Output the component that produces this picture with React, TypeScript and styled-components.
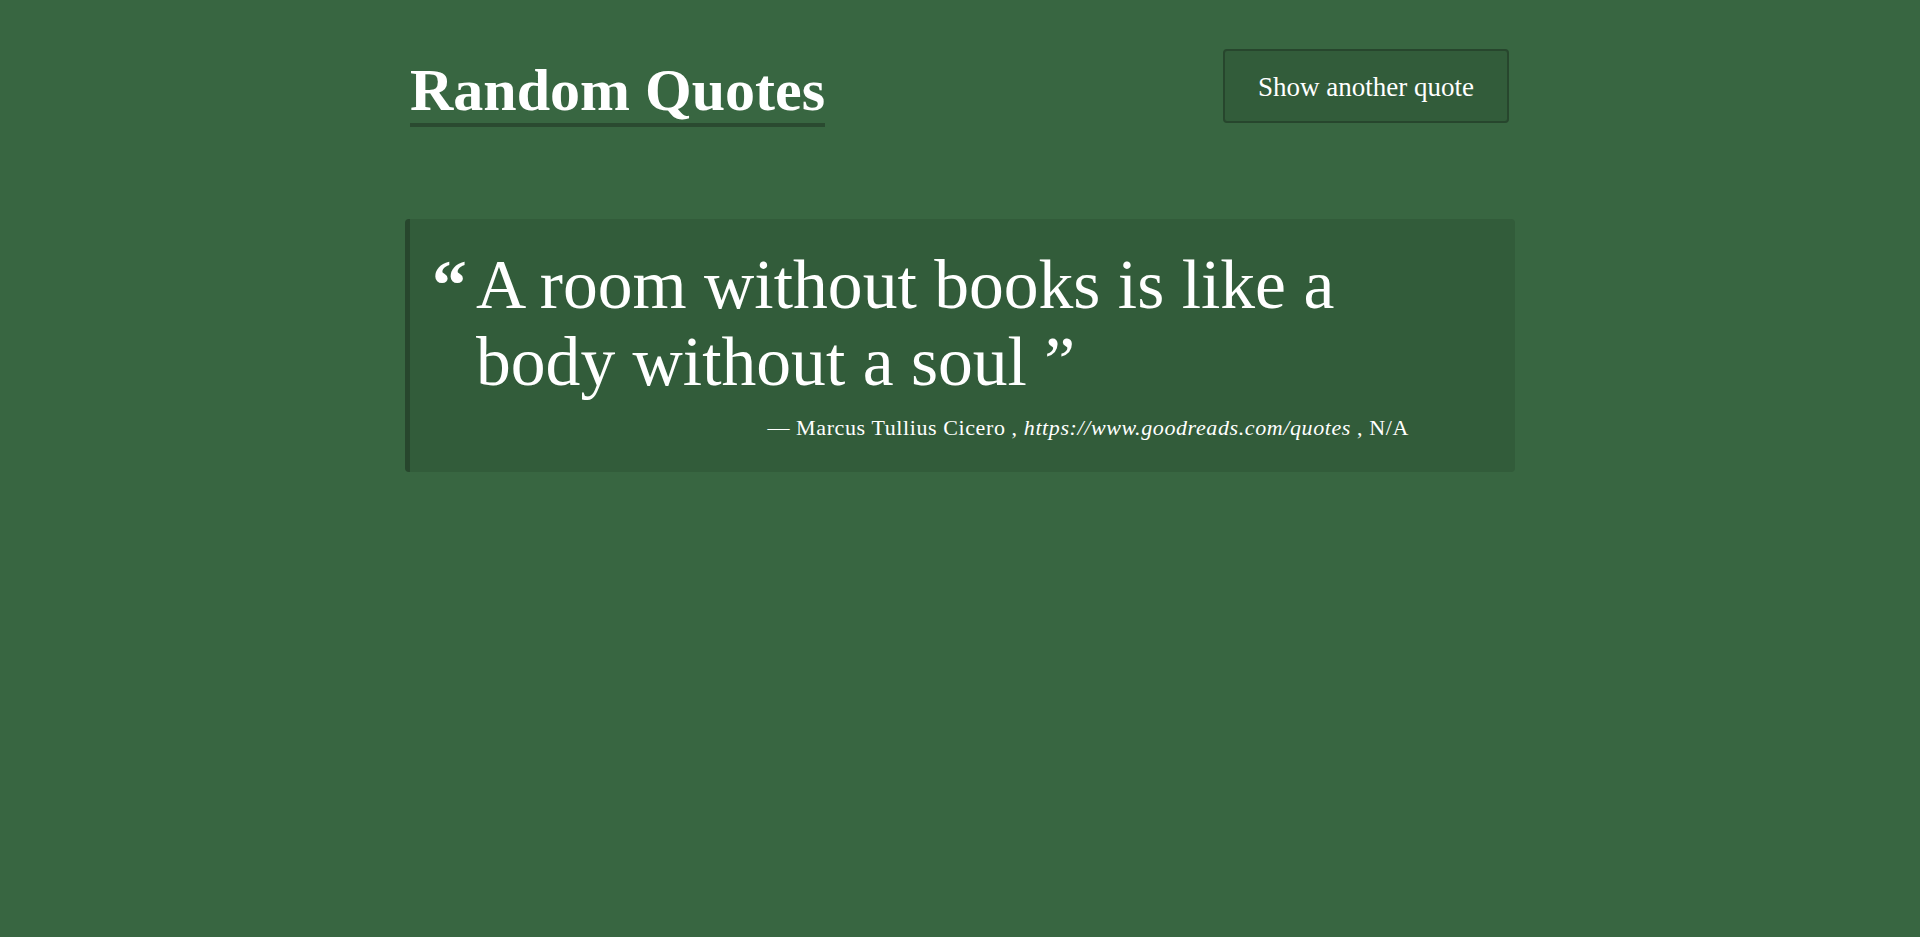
import React from "react";
import styled, { createGlobalStyle } from "styled-components";

const GlobalStyle = createGlobalStyle`
  html, body {
    margin: 0;
    padding: 0;
    background: #386641;
  }
  body {
    font-family: "Liberation Serif", "Times New Roman", serif;
    color: #ffffff;
    min-height: 937px;
  }
  * { box-sizing: border-box; }
`;

const Page = styled.div`
  width: 1110px;
  margin: 0 auto;
  padding-top: 49px;
`;

const Header = styled.header`
  display: flex;
  justify-content: space-between;
  align-items: flex-start;
  padding: 0 6px 0 5px;
`;

const Title = styled.h1`
  display: inline-block;
  margin: 8px 0 0;
  font-size: 60px;
  line-height: 66px;
  font-weight: 700;
  color: #ffffff;
  border-bottom: 4px solid #2a4a30;
`;

const NextButton = styled.button`
  font-family: "Liberation Serif", "Times New Roman", serif;
  font-size: 27px;
  line-height: 40px;
  color: #ffffff;
  background: #325c3a;
  border: 2px solid #27462d;
  border-radius: 4px;
  padding: 16px 33px 14px;
  cursor: pointer;
`;

const QuoteCard = styled.blockquote`
  margin: 92px 0 0;
  background: #325c3a;
  border-left: 5px solid #27462d;
  border-radius: 4px;
  padding: 27px 0 28px 22px;
  display: flex;
  align-items: flex-start;
`;

const Mark = styled.span`
  flex: 0 0 44px;
  font-size: 69.6px;
  line-height: 77px;
  font-weight: 700;
`;

const QuoteBody = styled.div`
  width: 933px;
  display: flex;
  flex-direction: column;
`;

const QuoteText = styled.p`
  margin: 0;
  font-size: 69.6px;
  line-height: 77px;
  font-weight: 400;
`;

const Attribution = styled.footer`
  margin-top: 11px;
  text-align: right;
  font-size: 22px;
  line-height: 33px;
  letter-spacing: 0.6px;
`;

const Source = styled.cite`
  font-style: italic;
`;

export default function App() {
  return (
    <>
      <GlobalStyle />
      <Page>
        <Header>
          <Title>Random Quotes</Title>
          <NextButton type="button">Show another quote</NextButton>
        </Header>
        <QuoteCard>
          <Mark>“</Mark>
          <QuoteBody>
            <QuoteText>A room without books is like a body without a soul ”</QuoteText>
            <Attribution>
              — Marcus Tullius Cicero , <Source>https://www.goodreads.com/quotes</Source> , N/A
            </Attribution>
          </QuoteBody>
        </QuoteCard>
      </Page>
    </>
  );
}
